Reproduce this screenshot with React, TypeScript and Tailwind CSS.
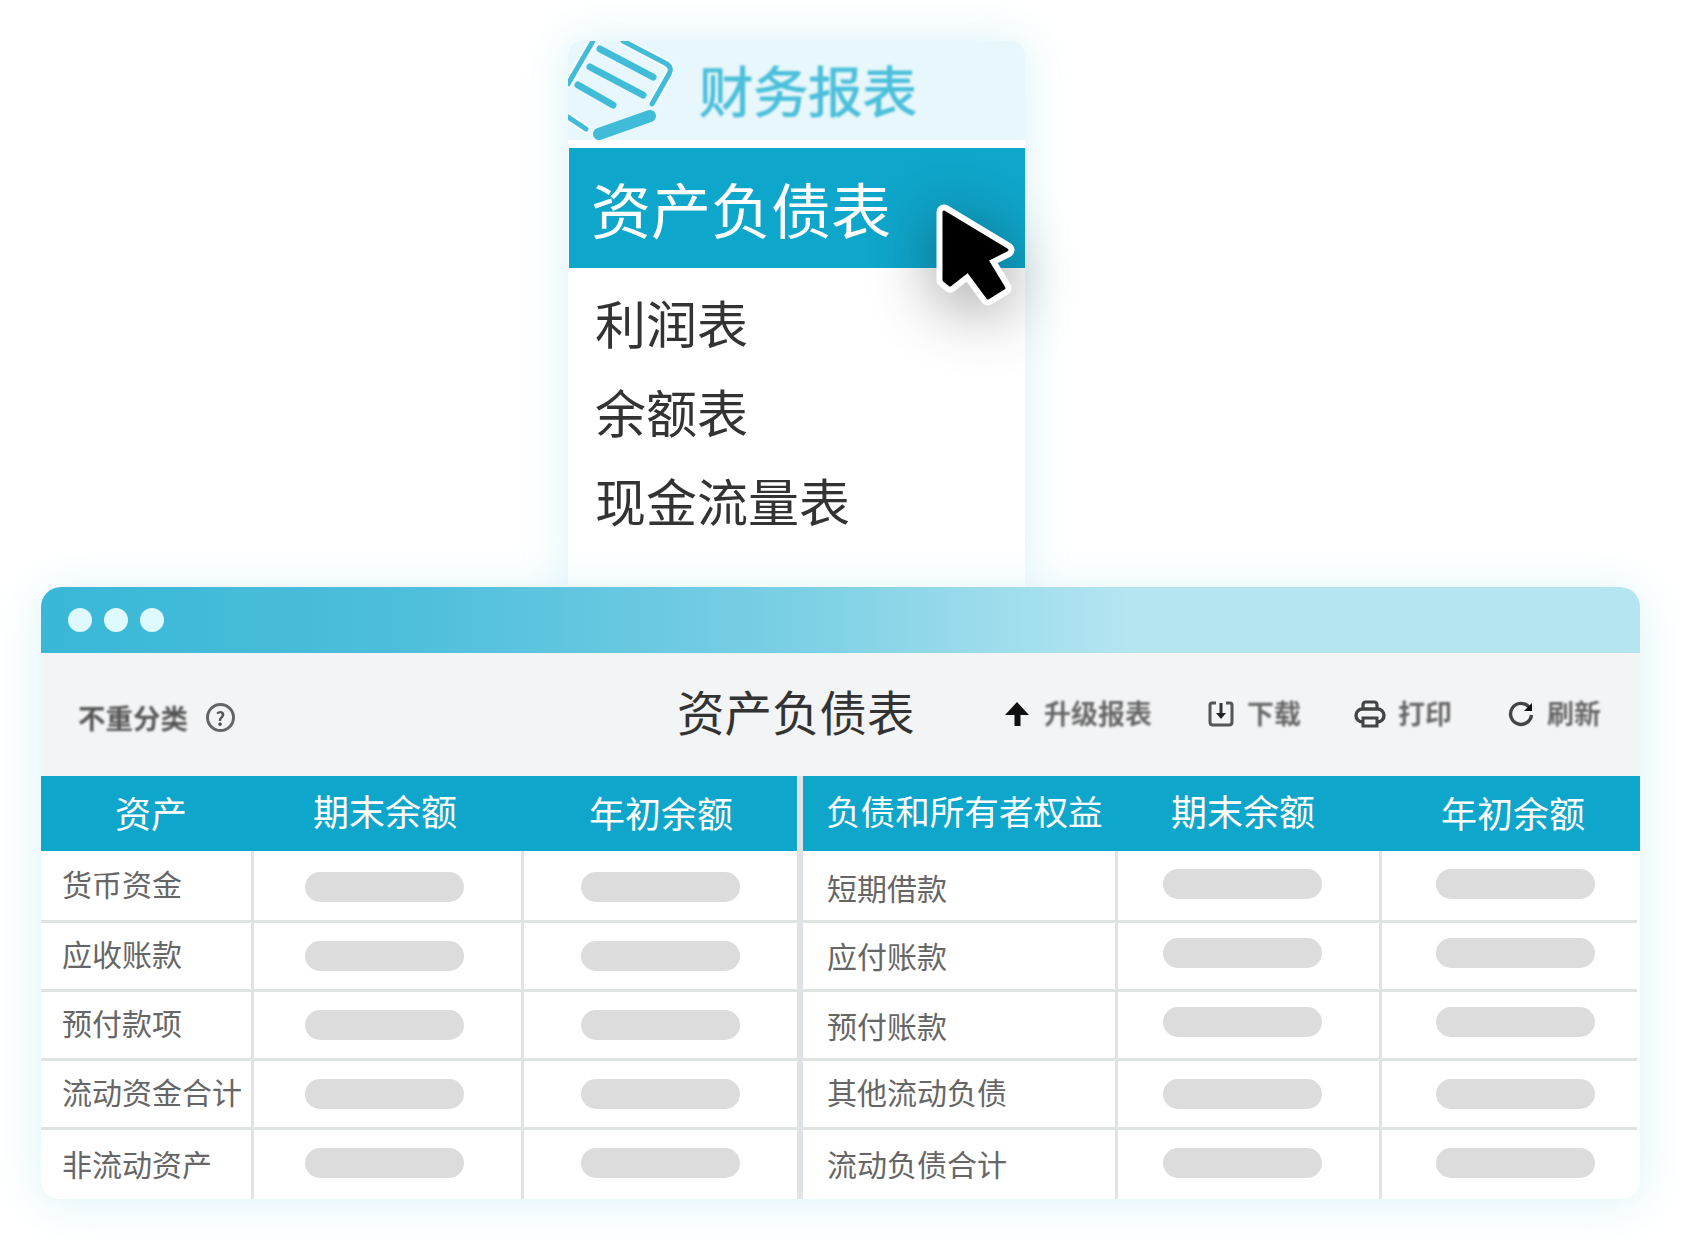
import React from "react";

const FONT = "[font-family:'Noto_Sans_CJK_SC','Noto_Sans',sans-serif]";
const HALO = "[text-shadow:0_0_3px_#ffffff]";

type Row = { label: string; tm: string; pm: string };

const leftRows: Row[] = [
  { label: "货币资金", tm: "mt-[12px]", pm: "mt-[21px]" },
  { label: "应收账款", tm: "mt-[10px]", pm: "mt-[18px]" },
  { label: "预付款项", tm: "mt-[10px]", pm: "mt-[18px]" },
  { label: "流动资金合计", tm: "mt-[10px]", pm: "mt-[18px]" },
  { label: "非流动资产", tm: "mt-[13px]", pm: "mt-[18px]" },
];
const rightRows: Row[] = [
  { label: "短期借款", tm: "mt-[16px]", pm: "mt-[18px]" },
  { label: "应付账款", tm: "mt-[12px]", pm: "mt-[15px]" },
  { label: "预付账款", tm: "mt-[13px]", pm: "mt-[15px]" },
  { label: "其他流动负债", tm: "mt-[10px]", pm: "mt-[18px]" },
  { label: "流动负债合计", tm: "mt-[13px]", pm: "mt-[18px]" },
];

function Pill({ cls }: { cls: string }) {
  return <div className={`h-[30px] w-[159px] rounded-[15px] bg-[#dcdcdc] ${cls}`} />;
}

function rowClass(i: number) {
  if (i === 0) return "h-[72px] border-b-[3px] border-[#dfe3e3]";
  if (i === 4) return "h-[69px]";
  return "h-[69px] border-b-[3px] border-[#dfe3e3]";
}

function Logo() {
  return (
    <svg viewBox="0 0 110 99" className="absolute left-0 top-0 h-[99px] w-[110px] blur-[0.6px]" fill="none" strokeLinecap="round">
      <g stroke="#ffffff" strokeWidth="9" opacity="0.7">
        <path d="M25 0 L0 43 M55 0 L97 22 Q105 26 101 33 L84 63 M0 76 L18 88" />
      </g>
      <g stroke="#40bcd9" strokeWidth="5">
        <path d="M25 0 L0 43 M55 0 L97 22 Q105 26 101 33 L84 63 M0 76 L18 88" />
      </g>
      <g stroke="#40bcd9" strokeWidth="7">
        <path d="M32 8 L85 36 M22 26 L75 54 M10 44 L45 64" />
      </g>
      <path d="M31 93 L82 75" stroke="#40bcd9" strokeWidth="12" />
    </svg>
  );
}

function Cursor() {
  const d = "M944 212 L1007 250 L987 260 L1004 288 L988 298 L968 271 L950 285 L944 280 Z";
  return (
    <svg
      viewBox="930 198 95 115"
      className="absolute left-[362px] top-[157px] h-[115px] w-[95px] overflow-visible [filter:drop-shadow(0_10px_32px_rgba(0,0,0,0.42))]"
    >
      <path d={d} fill="#fff" stroke="#fff" strokeWidth="15" strokeLinejoin="round" />
      <path d={d} fill="#000" stroke="#000" strokeWidth="3" strokeLinejoin="round" />
    </svg>
  );
}

function ArrowUp() {
  return (
    <svg viewBox="0 0 24 28" className="h-[28px] w-[24px] blur-[0.5px]">
      <path d="M12 2 L24 15 L15.5 15 L15.5 26 L9.5 26 L9.5 15 L0 15 Z" fill="#111" />
    </svg>
  );
}
function DownloadIcon() {
  return (
    <svg viewBox="0 0 26 28" className="h-[28px] w-[26px] blur-[0.7px]" fill="none">
      <path d="M8 3 H4 Q2 3 2 5 V22 Q2 25 5 25 H21 Q24 25 24 22 V5 Q24 3 22 3 H18" stroke="#555" strokeWidth="3" />
      <path d="M13 3 V14" stroke="#333" strokeWidth="3" />
      <path d="M8 13 L13 19 L18 13 Z" fill="#222" />
    </svg>
  );
}
function PrinterIcon() {
  return (
    <svg viewBox="0 0 32 30" className="h-[30px] w-[32px] blur-[0.7px]" fill="none">
      <path d="M9 10 V6 Q9 3 12 3 H20 Q23 3 23 6 V10" stroke="#444" strokeWidth="3.2" />
      <rect x="2" y="10" width="28" height="13" rx="6.5" stroke="#444" strokeWidth="3.4" />
      <path d="M9 19 H23 V27 H9 Z" stroke="#444" strokeWidth="3" fill="#f3f4f6" />
    </svg>
  );
}
function RefreshIcon() {
  return (
    <svg viewBox="0 0 26 28" className="h-[28px] w-[26px] blur-[0.7px]" fill="none">
      <path d="M21 7 A10.5 10.5 0 1 0 23.5 15" stroke="#444" strokeWidth="3.4" />
      <path d="M16 11 L24 11 L24 3 Z" fill="#111" />
    </svg>
  );
}

function Head({ children, cls }: { children: React.ReactNode; cls: string }) {
  return <div className={`whitespace-nowrap leading-[48px] text-white ${cls}`}>{children}</div>;
}

export default function App() {
  return (
    <div className={`h-[1239px] overflow-hidden bg-white pt-[41px] ${FONT}`}>
      {/* menu card */}
      <div className="relative z-0 ml-[568px] h-[546px] w-[457px] rounded-t-[14px] bg-white shadow-[0_0_45px_rgba(80,195,225,0.22)]">
        <div className="relative flex h-[99px] items-center overflow-hidden rounded-t-[14px] bg-[#e8f7fb] pb-[3px] pl-[131px]">
          <Logo />
          <span className={`text-[54.5px] leading-none text-[#4bbfda] blur-[0.8px] [-webkit-text-stroke:1px_#4bbfda] ${HALO}`}>财务报表</span>
        </div>
        <div className="ml-px mt-[8px] flex h-[120px] items-center bg-[#0fa6cb] pl-[22px] text-[60px] leading-none text-white">
          资产负债表
        </div>
        <div className="mt-[10px] pl-[27px] text-[51px] leading-[89px] text-[#333]">
          <div>利润表</div>
          <div>余额表</div>
          <div>现金流量表</div>
        </div>
        <Cursor />
      </div>

      {/* window */}
      <div className="relative z-10 ml-[41px] w-[1599px] overflow-hidden rounded-[20px] bg-white">
        <div className="flex h-[66px] items-center gap-[12px] bg-[linear-gradient(90deg,#39b7d7_0%,#4cbedb_22%,#7dd0e5_48%,#b4e5f1_68%,#b4e5f1_100%)] pl-[27px]">
          <div className="h-[24px] w-[24px] rounded-full bg-[#dffaff]" />
          <div className="h-[24px] w-[24px] rounded-full bg-[#dffaff]" />
          <div className="h-[24px] w-[24px] rounded-full bg-[#dffaff]" />
        </div>

        <div className="flex h-[123px] items-center bg-[#f3f4f6] pl-[37px]">
          <div className={`flex w-[599px] items-center pt-[6px] text-[27.5px] font-bold text-[#555] ${HALO}`}>
            <span className="blur-[1.2px]">不重分类</span>
            <span className="ml-[18px] flex h-[29px] w-[29px] items-center justify-center rounded-full border-[3px] border-[#666] text-[19px] font-bold leading-none blur-[0.7px]">?</span>
          </div>
          <div className="mb-[8px] w-[241px] text-[47.5px] leading-none text-[#333]">资产负债表</div>
          <div className={`mb-[2px] ml-[87px] flex items-center text-[27px] font-bold text-[#666] ${HALO}`}>
            <ArrowUp />
            <span className="ml-[15px] blur-[1.2px]">升级报表</span>
            <span className="ml-[56px]"><DownloadIcon /></span>
            <span className="ml-[13px] blur-[1.2px]">下载</span>
            <span className="ml-[53px]"><PrinterIcon /></span>
            <span className="ml-[12px] blur-[1.2px]">打印</span>
            <span className="ml-[56px]"><RefreshIcon /></span>
            <span className="ml-[13px] blur-[1.2px]">刷新</span>
          </div>
        </div>

        <div className="flex">
          {/* left half */}
          <div className="w-[756px]">
            <div className="flex h-[75px] items-center bg-[#0fa6cb] text-[36px]">
              <Head cls="mb-[4px] ml-[74px] w-[72px]">资产</Head>
              <Head cls="mb-[8px] ml-[126px] w-[144px]">期末余额</Head>
              <Head cls="mb-[4px] ml-[132px] w-[144px]">年初余额</Head>
            </div>
            {leftRows.map((r, i) => (
              <div key={r.label} className={`flex ${rowClass(i)}`}>
                <div className="h-full w-[213px] shrink-0 border-r-[3px] border-[#dfe3e3] pl-[21px]">
                  <div className={`whitespace-nowrap text-[30px] leading-[40px] text-[#666] ${r.tm}`}>{r.label}</div>
                </div>
                <div className="h-full w-[270px] shrink-0 border-r-[3px] border-[#dfe3e3] pl-[51px]">
                  <Pill cls={r.pm} />
                </div>
                <div className="h-full flex-1 pl-[57px]">
                  <Pill cls={r.pm} />
                </div>
              </div>
            ))}
          </div>

          {/* divider */}
          <div className="w-[6px] shrink-0 bg-[#dfe3e6]" />

          {/* right half */}
          <div className="flex-1">
            <div className="flex h-[75px] items-center bg-[#0fa6cb] text-[36px]">
              <Head cls="mb-[8px] ml-[23px] w-[280px] text-[34.6px]">负债和所有者权益</Head>
              <Head cls="mb-[8px] ml-[65px] w-[144px]">期末余额</Head>
              <Head cls="mb-[4px] ml-[126px] w-[144px]">年初余额</Head>
            </div>
            {rightRows.map((r, i) => (
              <div key={r.label} className={`mr-[3px] flex ${rowClass(i)}`}>
                <div className="h-full w-[315px] shrink-0 border-r-[3px] border-[#dfe3e3] pl-[24px]">
                  <div className={`whitespace-nowrap text-[30px] leading-[40px] text-[#666] ${r.tm}`}>{r.label}</div>
                </div>
                <div className="h-full w-[264px] shrink-0 border-r-[3px] border-[#dfe3e3] pl-[45px]">
                  <Pill cls={r.pm} />
                </div>
                <div className="h-full flex-1 pl-[54px]">
                  <Pill cls={r.pm} />
                </div>
              </div>
            ))}
          </div>
        </div>
      </div>
      {/* soft glow behind the window */}
      <div className="relative z-0 ml-[41px] mt-[-612px] h-[612px] w-[1599px] rounded-[20px] shadow-[0_4px_45px_rgba(80,195,225,0.2)]" />
    </div>
  );
}
